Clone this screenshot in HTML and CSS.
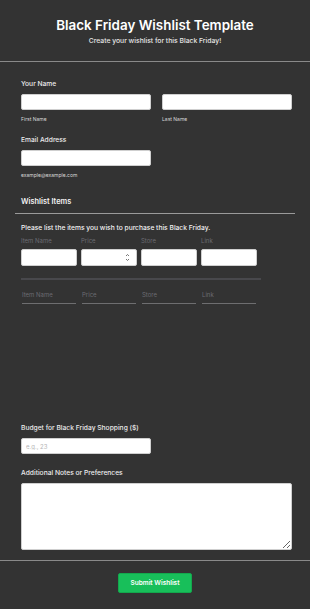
FILE: index.html
```html
<!DOCTYPE html>
<html lang="en">
<head>
    <meta charset="UTF-8">
    <meta name="viewport" content="width=device-width, initial-scale=1.0">
    <title>Black Friday Wishlist Template</title>
    <link rel="stylesheet" href="styles.css">
</head>
<body>
    <div class="header">
        <h1>Black Friday Wishlist Template</h1>
        <p>Create your wishlist for this Black Friday!</p>
    </div>
    <form class="form">
        <div class="field">
            <label class="label">Your Name</label>
            <div class="name-row">
                <div class="name-col">
                    <input type="text" class="input">
                    <span class="sublabel">First Name</span>
                </div>
                <div class="name-col">
                    <input type="text" class="input">
                    <span class="sublabel">Last Name</span>
                </div>
            </div>
        </div>
        <div class="field">
            <label class="label">Email Address</label>
            <input type="email" class="input half">
            <span class="sublabel">example@example.com</span>
        </div>

        <div class="section-title">Wishlist Items</div>

        <div class="items">
            <p class="items-desc">Please list the items you wish to purchase this Black Friday.</p>
            <div class="item-grid">
                <span class="col-head">Item Name</span>
                <span class="col-head">Price</span>
                <span class="col-head">Store</span>
                <span class="col-head">Link</span>
                <input type="text" class="input cell">
                <div class="input cell price">
                    <svg width="5" height="9" viewBox="0 0 5 9"><path d="M1 3 L2.5 1.5 L4 3 M1 6 L2.5 7.5 L4 6" fill="none" stroke="#555" stroke-width="0.8"/></svg>
                </div>
                <input type="text" class="input cell">
                <input type="text" class="input cell">
            </div>
            <div class="row-sep"></div>
            <div class="item-grid empty">
                <span class="col-head">Item Name</span>
                <span class="col-head">Price</span>
                <span class="col-head">Store</span>
                <span class="col-head">Link</span>
                <span class="underline"></span>
                <span class="underline"></span>
                <span class="underline"></span>
                <span class="underline"></span>
            </div>
        </div>

        <div class="field budget">
            <label class="label">Budget for Black Friday Shopping ($)</label>
            <input type="text" class="input half" placeholder="e.g., 23">
        </div>
        <div class="field last">
            <label class="label">Additional Notes or Preferences</label>
            <textarea class="notes"></textarea>
        </div>
    </form>
    <div class="footer">
        <button type="button" class="submit">Submit Wishlist</button>
    </div>
</body>
</html>
```

FILE: styles.css
```css
body {
    margin: 0;
    background-color: #333333;
    font-family: Inter, "Liberation Sans", Arial, sans-serif;
    color: #f2f2f2;
}
.header {
    text-align: center;
    padding-top: 16px;
    height: 45px;
    border-bottom: 1px solid #8a8a8a;
}
.header h1 {
    margin: 0;
    font-size: 13.4px;
    line-height: 18px;
    font-weight: 600;
    color: #ffffff;
}
.header p {
    margin: 2px 0 0;
    font-size: 6.8px;
    line-height: 10px;
    font-weight: 500;
    color: #e6e6e6;
}
.form {
    padding: 17px 18px 10px 21px;
}
.field {
    margin-bottom: 13px;
}
.field.last {
    margin-bottom: 0;
}
.label {
    display: block;
    font-size: 6.7px;
    line-height: 10px;
    font-weight: 500;
    color: #ececec;
    margin-bottom: 5px;
}
.name-row {
    display: flex;
    gap: 11px;
}
.name-col {
    flex: 1;
    display: flex;
    flex-direction: column;
}
.input {
    box-sizing: border-box;
    height: 16px;
    background: #ffffff;
    border: 1px solid #cfcfcf;
    border-radius: 2px;
    padding: 0 4px;
    font-family: inherit;
    font-size: 6px;
    margin: 0;
}
.input::placeholder {
    color: #b5b5b5;
}
.input.half {
    width: 130px;
    display: block;
}
.sublabel {
    display: block;
    font-size: 5px;
    line-height: 6px;
    color: #d9d9d9;
    margin-top: 6px;
}
.section-title {
    margin: 19px -3px 0 -6px;
    padding: 0 0 6px 6px;
    font-size: 7.4px;
    line-height: 10px;
    font-weight: 600;
    border-bottom: 1px solid #9a9a9a;
}
.items {
    padding-top: 10px;
    width: 240px;
}
.items-desc {
    margin: 0 0 6px;
    font-size: 6.7px;
    line-height: 8px;
    font-weight: 500;
}
.item-grid {
    display: grid;
    grid-template-columns: repeat(4, 56px);
    column-gap: 4px;
    row-gap: 5px;
}
.col-head {
    font-size: 6px;
    line-height: 6px;
    color: #6b6b72;
}
.cell {
    width: 56px;
    height: 17px;
}
.price {
    display: flex;
    align-items: center;
    justify-content: flex-end;
    padding-right: 6px;
}
.row-sep {
    height: 2px;
    background: #48484c;
    margin: 12px 0 12px;
}
.empty {
    column-gap: 6px;
    row-gap: 5px;
    grid-template-columns: repeat(4, 54px);
    padding-left: 1px;
}
.underline {
    height: 1px;
    background: #6e6e70;
}
.budget {
    margin-top: 119px;
    margin-bottom: 14px;
}
.notes {
    box-sizing: border-box;
    display: block;
    width: 271px;
    height: 67px;
    background: #ffffff;
    border: 1px solid #cfcfcf;
    border-radius: 2px;
    margin: 0;
}
.footer {
    border-top: 1px solid #8a8a8a;
    padding-top: 12px;
    height: 48px;
}
.submit {
    display: block;
    margin: 0 auto;
    width: 74px;
    height: 20px;
    background-color: #18bf5a;
    color: #ffffff;
    border: 1px solid #13a84d;
    border-radius: 2px;
    font-family: inherit;
    font-size: 6.5px;
    font-weight: 600;
    cursor: pointer;
}
```
